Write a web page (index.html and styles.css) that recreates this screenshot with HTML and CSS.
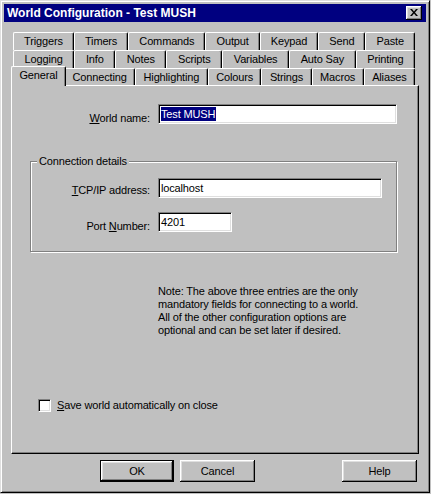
FILE: index.html
```html
<!DOCTYPE html>
<html lang="en">
  <head>
    <meta charset="UTF-8" />
    <title>World Configuration - Test MUSH</title>
    <link rel="stylesheet" href="styles.css">
  </head>
  <body>
    <div class="window">
      <div class="titlebar">
        <span class="title">World Configuration - Test MUSH</span>
        <span class="close">
          <svg width="8" height="7" viewBox="0 0 8 7">
            <path d="M0 0h2l2 2.5L6 0h2L5 3.5 8 7H6L4 4.5 2 7H0l3-3.5z" fill="#000" />
          </svg>
        </span>
      </div>

      <div class="tabs">
        <div class="tab-row">
          <div class="tab">Triggers</div>
          <div class="tab">Timers</div>
          <div class="tab">Commands</div>
          <div class="tab">Output</div>
          <div class="tab">Keypad</div>
          <div class="tab">Send</div>
          <div class="tab">Paste</div>
        </div>
        <div class="tab-row">
          <div class="tab">Logging</div>
          <div class="tab">Info</div>
          <div class="tab">Notes</div>
          <div class="tab">Scripts</div>
          <div class="tab">Variables</div>
          <div class="tab">Auto Say</div>
          <div class="tab">Printing</div>
        </div>
        <div class="tab-row">
          <div class="tab active">General</div>
          <div class="tab">Connecting</div>
          <div class="tab">Highlighting</div>
          <div class="tab">Colours</div>
          <div class="tab">Strings</div>
          <div class="tab">Macros</div>
          <div class="tab">Aliases</div>
        </div>
      </div>

      <div class="panel">
        <div class="row">
          <div class="label"><u>W</u>orld name:</div>
          <div class="field name-field"><span class="sel">Test MUSH</span></div>
        </div>

        <fieldset class="group">
          <legend>Connection details</legend>
          <div class="row">
            <div class="label hi"><u>T</u>CP/IP address:</div>
            <div class="field host-field">localhost</div>
          </div>
          <div class="row port-row">
            <div class="label">Port <u>N</u>umber:</div>
            <div class="field port-field">4201</div>
          </div>
        </fieldset>

        <p class="note">
          Note: The above three entries are the only<br>
          mandatory fields for connecting to a world.<br>
          All of the other configuration options are<br>
          optional and can be set later if desired.
        </p>

        <label class="check">
          <span class="box"></span>
          <span><u>S</u>ave world automatically on close</span>
        </label>
      </div>

      <div class="buttons">
        <button class="btn default">OK</button>
        <button class="btn">Cancel</button>
        <button class="btn help">Help</button>
      </div>
    </div>
  </body>
</html>
```

FILE: styles.css
```css
* {
  margin: 0;
  padding: 0;
  box-sizing: border-box;
}

body {
  background-color: #c0c0c0;
  font-family: "Liberation Sans", Arial, sans-serif;
  font-size: 11px;
  letter-spacing: -0.15px;
  color: #000;
}

/* window frame */
.window {
  width: 430px;
  height: 493px;
  background-color: #c0c0c0;
  border-top: 1px solid #dfdfdf;
  border-left: 1px solid #dfdfdf;
  border-right: 1px solid #000;
  border-bottom: 1px solid #000;
  box-shadow: inset 1px 1px #fff, inset -1px -1px #808080;
  padding: 3px;
  display: flex;
  flex-direction: column;
}

.titlebar {
  height: 18px;
  background-color: #000080;
  color: #fff;
  display: flex;
  align-items: center;
  justify-content: space-between;
  padding: 0 4px 0 3px;
}
.title {
  font-weight: bold;
  font-size: 12px;
  letter-spacing: 0;
}
.close {
  width: 16px;
  height: 14px;
  background-color: #c0c0c0;
  box-shadow: inset -1px -1px #000, inset 1px 1px #fff,
    inset -2px -2px #808080, inset 2px 2px #dfdfdf;
  display: flex;
  align-items: center;
  justify-content: center;
  padding: 0 1px 1px 0;
}
.close svg {
  display: block;
}

/* tab strip */
.tabs {
  margin-top: 10px;
  padding: 0 11px 0 9px;
}
.tab-row {
  display: flex;
  align-items: flex-start;
  height: 18px;
}
.tab-row:last-child {
  height: 17px;
}
.tab {
  flex: 1 1 auto;
  height: 18px;
  padding: 0 5px;
  line-height: 17px;
  text-align: center;
  white-space: nowrap;
  background-color: #c0c0c0;
  border-top: 1px solid #fff;
  border-left: 1px solid #fff;
  border-right: 1px solid #000;
  border-radius: 2px 2px 0 0;
  box-shadow: inset -1px 0 #808080;
}
.tab.active {
  position: relative;
  z-index: 1;
  height: 20px;
  margin: -2px -2px 0;
}

/* page area */
.panel {
  height: 369px;
  margin: 0 7px;
  border-top: 1px solid #fff;
  border-left: 1px solid #fff;
  border-right: 1px solid #000;
  border-bottom: 1px solid #000;
  box-shadow: inset -1px -1px #808080;
  padding-top: 18px;
}
.row {
  display: flex;
  align-items: flex-start;
  gap: 8px;
}
.label {
  width: 138px;
  text-align: right;
  line-height: 13px;
  padding-top: 8px;
  white-space: nowrap;
}
.label.hi {
  padding-top: 6px;
}
.field {
  height: 20px;
  background-color: #fff;
  border-top: 1px solid #808080;
  border-left: 1px solid #808080;
  border-bottom: 1px solid #fff;
  border-right: 1px solid #fff;
  box-shadow: inset 1px 1px #000, inset -1px -1px #dfdfdf;
  padding: 2px 2px 0;
  line-height: 14px;
  white-space: nowrap;
}
.name-field {
  width: 239px;
}
.host-field {
  width: 224px;
}
.port-field {
  width: 74px;
}
.sel {
  background-color: #000080;
  color: #fff;
  padding: 1px 1px 1px 0;
}

/* connection group box */
.group {
  width: 367px;
  min-width: 0;
  margin: 30px 0 0 18px;
  padding: 10px 0 18px;
  border: 1px solid #808080;
  box-shadow: inset 1px 1px #fff, 1px 1px #fff;
}
.group legend {
  margin-left: 6px;
  padding: 0 2px;
  line-height: 13px;
  background-color: #c0c0c0;
}
.group .label {
  width: 119px;
}
.port-row {
  margin-top: 14px;
}

.note {
  margin: 33px 0 0 146px;
  line-height: 13px;
}

.check {
  display: flex;
  align-items: center;
  gap: 6px;
  margin: 62px 0 0 26px;
  line-height: 13px;
}
.box {
  width: 13px;
  height: 13px;
  background-color: #fff;
  border-top: 1px solid #808080;
  border-left: 1px solid #808080;
  border-bottom: 1px solid #fff;
  border-right: 1px solid #fff;
  box-shadow: inset 1px 1px #000, inset -1px -1px #dfdfdf;
}

/* dialog buttons */
.buttons {
  display: flex;
  gap: 6px;
  margin: 6px 7px 0;
  padding: 0 2px 0 89px;
}
.btn {
  width: 75px;
  height: 22px;
  font-family: inherit;
  font-size: 11px;
  letter-spacing: -0.15px;
  color: #000;
  background-color: #c0c0c0;
  border: none;
  box-shadow: inset -1px -1px #000, inset 1px 1px #fff,
    inset -2px -2px #808080, inset 2px 2px #dfdfdf;
}
.btn.default {
  width: 74px;
  border: 1px solid #000;
}
.btn.help {
  margin-left: auto;
}
```
